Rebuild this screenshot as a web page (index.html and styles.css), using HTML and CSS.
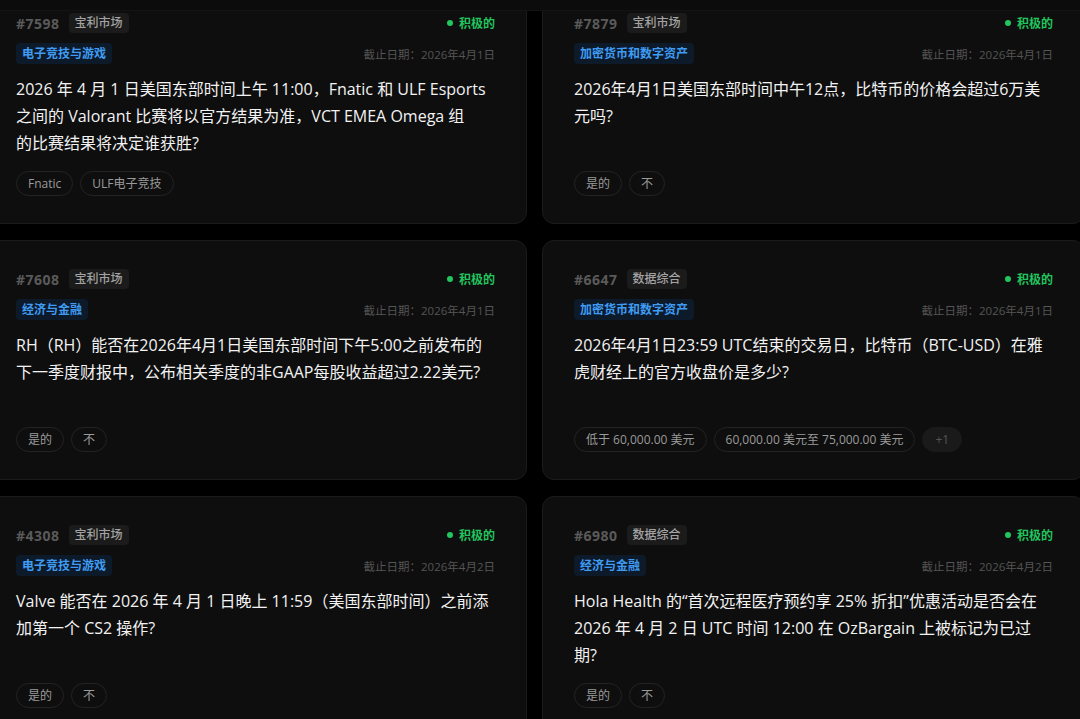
FILE: index.html
```html
<!DOCTYPE html>
<html lang="zh">
<head>
<meta charset="utf-8">
<title>Markets</title>
<link rel="stylesheet" href="styles.css">
</head>
<body>
<div class="topbar"></div>
<main class="grid">
  <article class="card">
    <div class="row1">
      <div class="ident"><span class="num">#7598</span><span class="badge">宝利市场</span></div>
      <span class="status"><i class="dot"></i>积极的</span>
    </div>
    <div class="row2">
      <span class="tag">电子竞技与游戏</span>
      <span class="date">截止日期：2026年4月1日</span>
    </div>
    <p class="q">2026 年 4 月 1 日美国东部时间上午 11:00，Fnatic 和 ULF Esports 之间的 Valorant 比赛将以官方结果为准，VCT EMEA Omega 组<br>的比赛结果将决定谁获胜?</p>
    <div class="opts"><span class="pill">Fnatic</span><span class="pill">ULF电子竞技</span></div>
  </article>
  <article class="card">
    <div class="row1">
      <div class="ident"><span class="num">#7879</span><span class="badge">宝利市场</span></div>
      <span class="status"><i class="dot"></i>积极的</span>
    </div>
    <div class="row2">
      <span class="tag">加密货币和数字资产</span>
      <span class="date">截止日期：2026年4月1日</span>
    </div>
    <p class="q">2026年4月1日美国东部时间中午12点，比特币的价格会超过6万美元吗?</p>
    <div class="opts"><span class="pill">是的</span><span class="pill">不</span></div>
  </article>
  <article class="card">
    <div class="row1">
      <div class="ident"><span class="num">#7608</span><span class="badge">宝利市场</span></div>
      <span class="status"><i class="dot"></i>积极的</span>
    </div>
    <div class="row2">
      <span class="tag">经济与金融</span>
      <span class="date">截止日期：2026年4月1日</span>
    </div>
    <p class="q">RH（RH）能否在2026年4月1日美国东部时间下午5:00之前发布的下一季度财报中，公布相关季度的非GAAP每股收益超过2.22美元?</p>
    <div class="opts"><span class="pill">是的</span><span class="pill">不</span></div>
  </article>
  <article class="card">
    <div class="row1">
      <div class="ident"><span class="num">#6647</span><span class="badge">数据综合</span></div>
      <span class="status"><i class="dot"></i>积极的</span>
    </div>
    <div class="row2">
      <span class="tag">加密货币和数字资产</span>
      <span class="date">截止日期：2026年4月1日</span>
    </div>
    <p class="q">2026年4月1日23:59 UTC结束的交易日，比特币（BTC-USD）在雅虎财经上的官方收盘价是多少?</p>
    <div class="opts"><span class="pill">低于 60,000.00 美元</span><span class="pill">60,000.00 美元至 75,000.00 美元</span><span class="pill more">+1</span></div>
  </article>
  <article class="card">
    <div class="row1">
      <div class="ident"><span class="num">#4308</span><span class="badge">宝利市场</span></div>
      <span class="status"><i class="dot"></i>积极的</span>
    </div>
    <div class="row2">
      <span class="tag">电子竞技与游戏</span>
      <span class="date">截止日期：2026年4月2日</span>
    </div>
    <p class="q">Valve 能否在 2026 年 4 月 1 日晚上 11:59（美国东部时间）之前添加第一个 CS2 操作?</p>
    <div class="opts"><span class="pill">是的</span><span class="pill">不</span></div>
  </article>
  <article class="card">
    <div class="row1">
      <div class="ident"><span class="num">#6980</span><span class="badge">数据综合</span></div>
      <span class="status"><i class="dot"></i>积极的</span>
    </div>
    <div class="row2">
      <span class="tag">经济与金融</span>
      <span class="date">截止日期：2026年4月2日</span>
    </div>
    <p class="q">Hola Health 的“首次远程医疗预约享 25% 折扣”优惠活动是否会在 2026 年 4 月 2 日 UTC 时间 12:00 在 OzBargain 上被标记为已过期?</p>
    <div class="opts"><span class="pill">是的</span><span class="pill">不</span></div>
  </article>
</main>
</body>
</html>
```

FILE: styles.css
```css
* { box-sizing: border-box; }

html, body {
  margin: 0;
  padding: 0;
  background: #000;
  overflow: hidden;
}

body {
  font-family: "Open Sans", "Noto Sans CJK SC", sans-serif;
  color: #ececec;
  width: 1080px;
  height: 719px;
}

.topbar {
  position: fixed;
  top: 0;
  left: 0;
  right: 0;
  height: 11px;
  background: #0c0c0c;
  border-bottom: 1px solid #131313;
  z-index: 5;
}

.grid {
  display: grid;
  grid-template-columns: 543px 543px;
  column-gap: 15px;
  row-gap: 16px;
  width: 1101px;
  margin: -16px 0 0 -16px;
}

.card {
  height: 240px;
  background: #0e0e0e;
  border: 1px solid #1b1b1b;
  border-radius: 12px;
  padding: 28px 31px 27px;
  display: flex;
  flex-direction: column;
}

.row1 {
  display: flex;
  justify-content: space-between;
  align-items: center;
  height: 20px;
}

.ident {
  display: flex;
  align-items: center;
  gap: 9px;
}

.num {
  font-size: 14px;
  font-weight: 700;
  color: #5a5a5a;
  letter-spacing: 0.5px;
}

.badge {
  height: 20px;
  line-height: 20px;
  padding: 0 6px;
  border-radius: 4px;
  background: #1b1b1b;
  color: #a3a3a3;
  font-size: 12px;
  font-weight: 500;
}

.status {
  display: flex;
  align-items: center;
  gap: 6px;
  color: #22c55e;
  font-size: 12px;
  font-weight: 700;
}

.dot {
  width: 6px;
  height: 6px;
  border-radius: 50%;
  background: #22c55e;
}

.row2 {
  margin-top: 10px;
  display: flex;
  justify-content: space-between;
  align-items: center;
  height: 21px;
}

.tag {
  height: 21px;
  line-height: 21px;
  padding: 0 6px;
  border-radius: 4px;
  background: #0d1a2a;
  color: #3f9cf2;
  font-size: 12px;
  font-weight: 600;
}

.date {
  font-size: 11.5px;
  color: #555;
}

.q {
  margin: 12px 0 0;
  font-size: 16px;
  line-height: 27px;
  color: #f2f2f2;
  font-weight: 400;
}

.opts {
  margin-top: auto;
  display: flex;
  gap: 7px;
}

.pill {
  height: 25px;
  line-height: 23px;
  padding: 0 11px;
  border: 1px solid #232323;
  border-radius: 13px;
  color: #9a9a9a;
  font-size: 12px;
  white-space: nowrap;
}

.pill.more {
  background: #1a1a1a;
  border-color: #1a1a1a;
  color: #555;
  padding: 0 12px;
}
```
